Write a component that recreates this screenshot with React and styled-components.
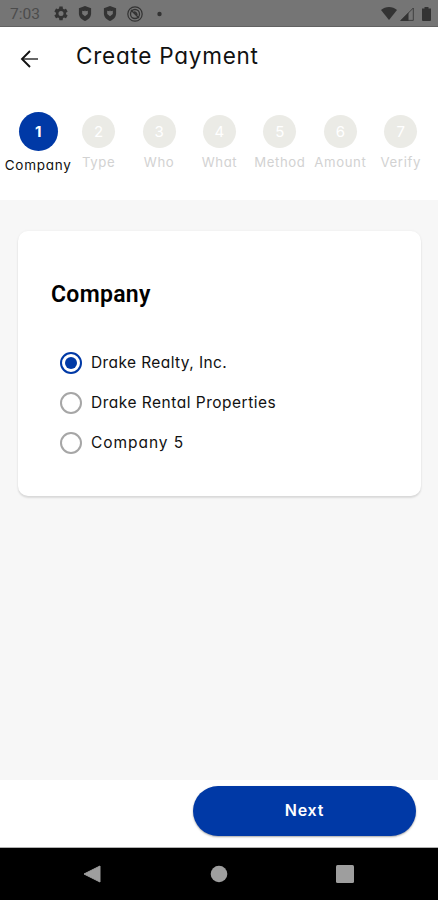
import React from 'react'
import styled, { createGlobalStyle } from 'styled-components'

const colors = {
  blue: '#0039a6',
  dark: '#111',
  muted: '#d2d2d2',
  step: '#ebebe6',
  page: '#f7f7f7',
  status: '#757575',
  statusIcon: '#333',
  nav: '#9e9e9e',
}

const GlobalStyle = createGlobalStyle`
  * {
    box-sizing: border-box;
  }

  body {
    margin: 0;
    color: ${colors.dark};
    font-family: Inter, 'Open Sans', sans-serif;
    font-feature-settings: 'cv11';
  }
`

const Screen = styled.div`
  display: flex;
  flex-direction: column;
  width: 438px;
  height: 900px;
  background: #fff;
  overflow: hidden;
`

const StatusBar = styled.div`
  display: flex;
  align-items: center;
  justify-content: space-between;
  height: 27px;
  padding: 1px 7px 0 10px;
  background: ${colors.status};
  border-bottom: 1px solid #626262;
  color: ${colors.statusIcon};
`

const StatusGroup = styled.div`
  display: flex;
  align-items: center;
  gap: ${props => props.$gap};

  svg {
    display: block;
  }
`

const Clock = styled.span`
  width: 32px;
  margin-right: 1px;
  color: #4c4c4c;
  font: 400 15.5px/18px Roboto, sans-serif;
`

const Header = styled.header`
  display: flex;
  align-items: center;
  height: 62px;
  padding-left: 20px;

  svg {
    display: block;
    margin-top: 1px;
  }
`

const Title = styled.h1`
  margin: 0 0 5px 37px;
  font-size: 22.5px;
  font-weight: 400;
  letter-spacing: 0.75px;
  line-height: 30px;
  white-space: nowrap;
`

const Steps = styled.ol`
  display: flex;
  height: 111px;
  margin: 0;
  padding: 23px 7px 0 8px;
  list-style: none;
`

const Step = styled.li`
  display: flex;
  flex: 1 0 0;
  flex-direction: column;
  align-items: center;
  min-width: 0;
  padding-top: ${props => (props.$active ? 0 : '3px')};
`

const StepCircle = styled.span`
  display: flex;
  align-items: center;
  justify-content: center;
  width: ${props => (props.$active ? '39px' : '33px')};
  height: ${props => (props.$active ? '39px' : '33px')};
  border-radius: 50%;
  background: ${props => (props.$active ? colors.blue : colors.step)};
  color: #fff;
  font-size: 15px;
  font-weight: ${props => (props.$active ? 700 : 400)};
`

const StepLabel = styled.span`
  margin-top: 4px;
  color: ${props => (props.$active ? colors.dark : colors.muted)};
  font-size: ${props => (props.$active ? '13.5px' : '13.2px')};
  letter-spacing: ${props => (props.$active ? '0.75px' : '0.6px')};
  line-height: 20px;
  white-space: nowrap;
`

const Content = styled.main`
  flex: 1;
  padding: 31px 17px 0 18px;
  background: ${colors.page};
`

const Card = styled.section`
  height: 265px;
  padding: 49px 33px 0;
  background: #fff;
  border-radius: 10px;
  box-shadow: 0 2px 2px rgba(0, 0, 0, 0.11), 0 0 3px rgba(0, 0, 0, 0.05);
`

const CardTitle = styled.h2`
  margin: 0 0 33px;
  color: #000;
  font: 600 23px/30px Roboto, sans-serif;
  letter-spacing: 0.3px;
`

const Option = styled.label`
  display: flex;
  align-items: center;
  height: 40px;
  padding-left: 9px;
`

const Radio = styled.span`
  display: flex;
  align-items: center;
  justify-content: center;
  width: 22px;
  height: 22px;
  border: 2px solid ${props => (props.$checked ? colors.blue : '#a6a6a6')};
  border-radius: 50%;

  &::before {
    content: '';
    width: 12px;
    height: 12px;
    border-radius: 50%;
    background: ${props => (props.$checked ? colors.blue : 'transparent')};
  }
`

const OptionText = styled.span`
  margin-left: 9px;
  font-size: 15.5px;
  letter-spacing: ${props => props.$spacing};
  line-height: 22px;
  white-space: nowrap;
`

const Footer = styled.footer`
  display: flex;
  justify-content: flex-end;
  height: 68px;
  padding: 6px 22px 0 0;
  border-bottom: 1px solid #b0b0b0;
`

const NextButton = styled.button`
  width: 223px;
  height: 50px;
  padding: 0 0 2px;
  border: 0;
  border-radius: 25px;
  background: ${colors.blue};
  box-shadow: 0 1px 2px rgba(0, 0, 0, 0.35);
  color: #fff;
  font-family: inherit;
  font-size: 16px;
  font-weight: 600;
  letter-spacing: 0.8px;
`

const NavBar = styled.nav`
  display: flex;
  align-items: center;
  height: 52px;
  padding: 0 84px 0 83px;
  justify-content: space-between;
  background: #000;
`

const Gear = () => (
  <svg width="14" height="15" viewBox="2 2 20 20" fill="currentColor">
    <path
      d="M19.14 12.94c.04-.3.06-.61.06-.94 0-.32-.02-.64-.07-.94l2.03-1.58a.49.49 0 0 0 .12-.61l-1.92-3.32a.49.49 0 0 0-.59-.22l-2.39.96c-.5-.38-1.03-.7-1.62-.94l-.36-2.54A.48.48 0 0 0 13.92 2h-3.84c-.24 0-.43.17-.47.41l-.36 2.54c-.59.24-1.13.57-1.62.94l-2.39-.96a.49.49 0 0 0-.59.22L2.74 8.87a.48.48 0 0 0 .12.61l2.03 1.58c-.05.3-.09.63-.09.94s.02.64.07.94l-2.03 1.58a.49.49 0 0 0-.12.61l1.92 3.32c.12.22.37.29.59.22l2.39-.96c.5.38 1.03.7 1.62.94l.36 2.54c.05.24.24.41.48.41h3.84c.24 0 .44-.17.47-.41l.36-2.54c.59-.24 1.13-.56 1.62-.94l2.39.96c.22.08.47 0 .59-.22l1.92-3.32a.48.48 0 0 0-.12-.61zM12 15.6a3.6 3.6 0 1 1 0-7.2 3.600 3.600 0 0 1 0 7.200z"
    />
  </svg>
)

const Shield = () => (
  <svg width="14" height="15" viewBox="0 0 14 16">
    <path d="M7 0 13.500 2.500V8c0 4-3 6.700-6.500 8C3.500 14.700.5 12 .5 8V2.500z" fill="currentColor" />
    <path d="m4 5 2.300.7L7 4.600l.7 1.100L10 5v3.500L7 11 4 8.500z" fill={colors.status} />
  </svg>
)

const Blocked = () => (
  <svg width="16" height="16" viewBox="0 0 16 16" fill="none" stroke="currentColor">
    <circle cx="8" cy="8" r="7.200" strokeWidth="1.200" />
    <circle cx="8" cy="8" r="4.500" strokeWidth="1.300" />
    <path d="m4 4 8 8M7 6c1.800 0 2.700.8 3 3" strokeWidth="1.400" />
  </svg>
)

const steps = ['Company', 'Type', 'Who', 'What', 'Method', 'Amount', 'Verify']

const companies = [
  { name: 'Drake Realty, Inc.', spacing: '0.4px' },
  { name: 'Drake Rental Properties', spacing: '0.5px' },
  { name: 'Company 5', spacing: '0.95px' },
]

export default function App() {
  return (
    <Screen>
      <GlobalStyle />
      <StatusBar>
        <StatusGroup $gap="10.5px">
          <Clock>7:03</Clock>
          <Gear />
          <Shield />
          <Shield />
          <Blocked />
          <svg width="9" height="6">
            <circle cx="5.500" cy="3" r="2.200" fill="currentColor" />
          </svg>
        </StatusGroup>
        <StatusGroup $gap="2.5px">
          <svg width="16" height="13" viewBox="0 0 16 13">
            <path d="M0 3C4.500-1 11.500-1 16 3L8 13z" fill="currentColor" />
          </svg>
          <svg width="14" height="14" viewBox="0 0 14 14">
            <path d="M13.300 1v12.400H1z" fill="none" stroke="currentColor" strokeWidth="0.800" />
            <path d="M0 14 8.500 5.500V14z" fill="currentColor" />
          </svg>
          <svg width="15" height="14" viewBox="0 0 15 14">
            <path d="M8.500 0h4v1.500H15V13a1 1 0 0 1-1 1H7a1 1 0 0 1-1-1V1.500h2.500z" fill="currentColor" />
          </svg>
        </StatusGroup>
      </StatusBar>

      <Header>
        <svg width="19" height="18" viewBox="0 0 19 18" fill="none">
          <path d="M2 9h16" stroke="#555" strokeWidth="1.800" />
          <path d="M10 1 2 9l8 8" stroke={colors.dark} strokeWidth="1.900" />
        </svg>
        <Title>Create Payment</Title>
      </Header>

      <Steps>
        {steps.map((label, i) => (
          <Step key={label} $active={i === 0}>
            <StepCircle $active={i === 0}>{i + 1}</StepCircle>
            <StepLabel $active={i === 0}>{label}</StepLabel>
          </Step>
        ))}
      </Steps>

      <Content>
        <Card>
          <CardTitle>Company</CardTitle>
          {companies.map(({ name, spacing }, i) => (
            <Option key={name}>
              <Radio $checked={i === 0} />
              <OptionText $spacing={spacing}>{name}</OptionText>
            </Option>
          ))}
        </Card>
      </Content>

      <Footer>
        <NextButton>Next</NextButton>
      </Footer>

      <NavBar>
        <svg width="18" height="18" viewBox="0 0 18 18">
          <path d="M17 1v16L1 9z" fill={colors.nav} stroke={colors.nav} strokeLinejoin="round" />
        </svg>
        <svg width="18" height="18">
          <circle cx="9" cy="9" r="8.300" fill={colors.nav} />
        </svg>
        <svg width="18" height="18">
          <rect width="18" height="18" rx="1.500" fill={colors.nav} />
        </svg>
      </NavBar>
    </Screen>
  )
}
